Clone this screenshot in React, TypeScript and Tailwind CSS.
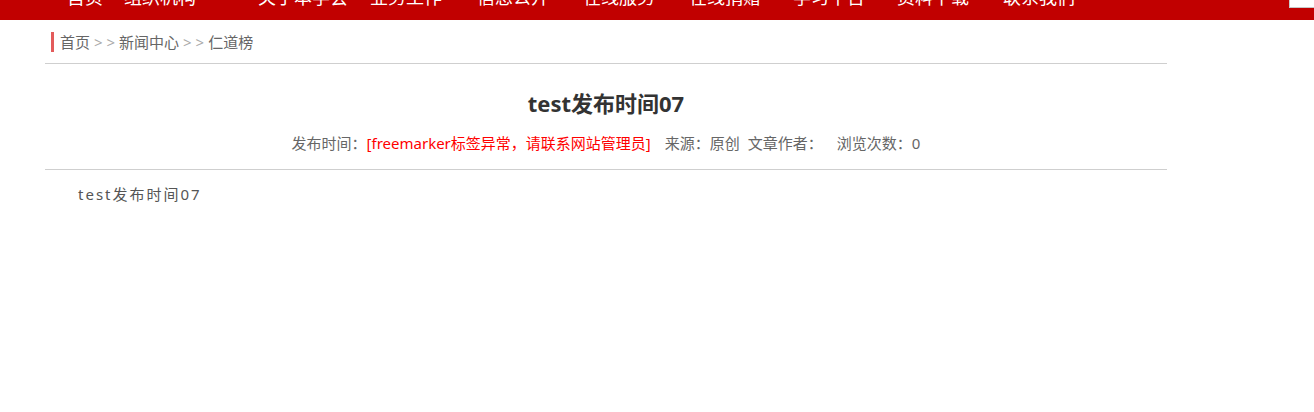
const navItems = [
  { label: "首页", w: "w-[57px]" },
  { label: "组织机构", w: "w-[134px]" },
  { label: "关于本学会", w: "w-[112px]" },
  { label: "业务工作", w: "w-[107px]" },
  { label: "信息公开", w: "w-[106px]" },
  { label: "在线服务", w: "w-[106px]" },
  { label: "在线捐赠", w: "w-[104px]" },
  { label: "学习平台", w: "w-[104px]" },
  { label: "资料下载", w: "w-[106px]" },
  { label: "联系我们", w: "w-[90px]" },
];

export default function App() {
  return (
    <div
      className="relative min-h-[412px] bg-white"
      style={{ fontFamily: '"Noto Sans", "Noto Sans CJK SC", sans-serif' }}
    >
      <div className="h-[20px] overflow-hidden bg-[#c10000]">
        <div className="-mt-[12px] flex pl-[67px] text-[18px] leading-[18px] whitespace-nowrap text-white">
          {navItems.map((item) => (
            <div key={item.label} className={`${item.w} shrink-0`}>
              {item.label}
            </div>
          ))}
        </div>
      </div>
      <div className="absolute top-0 right-0 h-[8px] w-[25px] border-b border-l border-[#c8c8c8] bg-white" />

      <div className="ml-[45px] w-[1122px]">
        <div className="border-b border-[#cfcfcf] pt-[12px] pb-[11px]">
          <div className="ml-[6px] flex h-[20px] items-center border-l-[3px] border-[#e35b5b] pl-[6px] text-[15px] leading-[20px] text-[#666]">
            <span>首页</span>
            <span className="mx-[4px] text-[#aaa]">&gt;&nbsp;&gt;</span>
            <span>新闻中心</span>
            <span className="mx-[4px] text-[#aaa]">&gt;&nbsp;&gt;</span>
            <span>仁道榜</span>
          </div>
        </div>

        <div className="border-b border-[#cfcfcf] pb-[16px] text-center">
          <h1 className="mt-[24px] text-[22px] leading-[30px] font-bold text-[#333]">
            test发布时间07
          </h1>
          <div className="mt-[15px] text-[15px] leading-[20px] text-[#666]">
            <span>发布时间：</span>
            <span className="text-[#ff0000]">[freemarker标签异常，请联系网站管理员]</span>
            <span className="ml-[14px]">来源：原创</span>
            <span className="ml-[8px]">文章作者：</span>
            <span className="ml-[14px]">浏览次数：0</span>
          </div>
        </div>

        <div className="pt-[14px] pl-[33px] text-[15px] leading-[20px] tracking-[2px] text-[#555]">
          test发布时间07
        </div>
      </div>
    </div>
  );
}
